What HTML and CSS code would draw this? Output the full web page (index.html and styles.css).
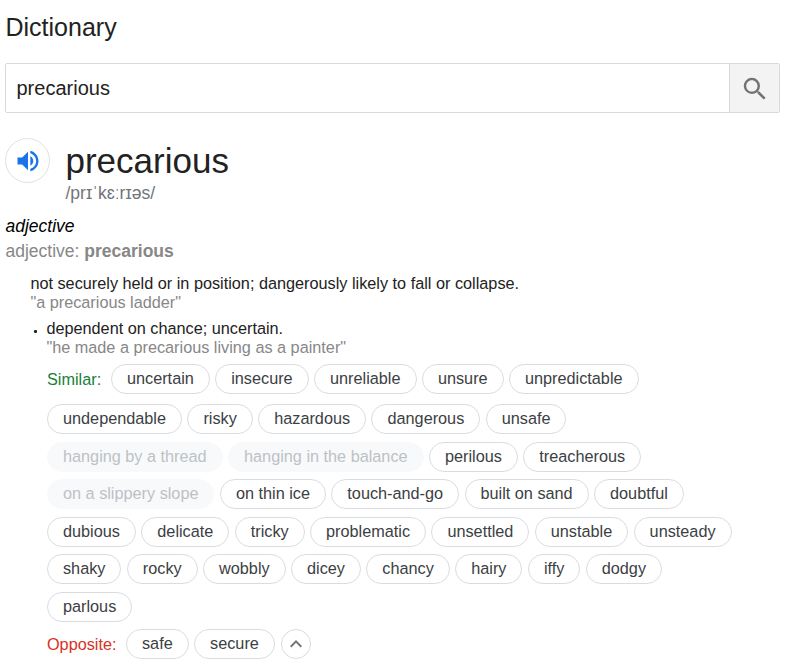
FILE: index.html
```html
<!DOCTYPE html>
<html lang="en">
<head>
<meta charset="utf-8">
<title>Dictionary</title>
<link rel="stylesheet" href="styles.css">
</head>
<body>
<main class="dictionary">
  <h1 class="title">Dictionary</h1>
  <div class="search">
    <div class="search-text">precarious</div>
    <button class="search-button" aria-label="Search">
      <svg class="search-icon" viewBox="0 0 24 24"><path d="M15.5 14h-.79l-.28-.27A6.47 6.47 0 0 0 16 9.5 6.5 6.5 0 1 0 9.5 16c1.61 0 3.09-.59 4.23-1.57l.27.28v.79l5 4.99L20.49 19l-4.99-5zm-6 0C7.01 14 5 11.99 5 9.5S7.01 5 9.5 5 14 7.01 14 9.5 11.99 14 9.5 14z"/></svg>
    </button>
  </div>
  <header class="entry">
    <button class="speaker" aria-label="Listen">
      <svg class="speaker-icon" viewBox="0 0 24 24"><path d="M3 9v6h4l5 5V4L7 9H3zm13.5 3A4.5 4.5 0 0 0 14 7.97v8.05A4.5 4.5 0 0 0 16.5 12zM14 3.23v2.06c2.89.86 5 3.54 5 6.71s-2.11 5.85-5 6.71v2.06c4.01-.91 7-4.49 7-8.77s-2.99-7.86-7-8.77z"/></svg>
    </button>
    <div>
      <h2 class="word">precarious</h2>
      <div class="phonetic">/prɪˈkɛːrɪəs/</div>
    </div>
  </header>
  <div class="part">adjective</div>
  <div class="forms">adjective: <b>precarious</b></div>
  <section class="sense">
    <div class="definition">not securely held or in position; dangerously likely to fall or collapse.</div>
    <div class="example">"a precarious ladder"</div>
    <div class="subsense">
      <div class="definition bulleted">dependent on chance; uncertain.</div>
      <div class="example">"he made a precarious living as a painter"</div>
      <div class="row first"><span class="label similar">Similar:</span><span class="chip">uncertain</span><span class="chip">insecure</span><span class="chip">unreliable</span><span class="chip">unsure</span><span class="chip">unpredictable</span></div>
      <div class="row"><span class="chip">undependable</span><span class="chip">risky</span><span class="chip">hazardous</span><span class="chip">dangerous</span><span class="chip">unsafe</span></div>
      <div class="row"><span class="chip muted">hanging by a thread</span><span class="chip muted">hanging in the balance</span><span class="chip">perilous</span><span class="chip">treacherous</span></div>
      <div class="row"><span class="chip muted">on a slippery slope</span><span class="chip">on thin ice</span><span class="chip">touch-and-go</span><span class="chip">built on sand</span><span class="chip">doubtful</span></div>
      <div class="row"><span class="chip">dubious</span><span class="chip">delicate</span><span class="chip">tricky</span><span class="chip">problematic</span><span class="chip">unsettled</span><span class="chip">unstable</span><span class="chip">unsteady</span></div>
      <div class="row"><span class="chip">shaky</span><span class="chip">rocky</span><span class="chip">wobbly</span><span class="chip">dicey</span><span class="chip">chancy</span><span class="chip">hairy</span><span class="chip">iffy</span><span class="chip">dodgy</span></div>
      <div class="row"><span class="chip">parlous</span></div>
      <div class="row"><span class="label opposite">Opposite:</span><span class="chip">safe</span><span class="chip">secure</span><button class="collapse" aria-label="Show less"><svg class="collapse-icon" viewBox="0 0 24 24"><path d="M12 8l-6 6 1.41 1.41L12 10.83l4.59 4.58L18 14z"/></svg></button></div>
    </div>
  </section>
</main>
</body>
</html>
```
FILE: styles.css
```css
* { box-sizing: border-box; }
body {
  margin: 0;
  background: #fff;
  color: #222;
  font-family: "Liberation Sans", Arial, sans-serif;
  font-size: 16.25px;
}
button { padding: 0; font: inherit; }
.dictionary { padding: 12px 9px 0 5px; }
.title { margin: 0; padding-left: 0.5px; font-size: 25px; font-weight: 400; line-height: 31px; }
.search {
  display: flex;
  height: 50px;
  margin-top: 20px;
  border: 1px solid #d9d9d9;
  border-radius: 2px;
}
.search-text { flex: 1; padding-left: 10.5px; font-size: 20px; line-height: 48px; }
.search-button {
  display: flex;
  align-items: center;
  justify-content: center;
  width: 50px;
  border: 0;
  border-left: 1px solid #d9d9d9;
  background: #f3f3f3;
}
.search-icon { width: 30px; height: 30px; margin-top: 1px; fill: #737373; }
.entry { display: flex; gap: 15.5px; margin-top: 25px; }
.speaker {
  display: flex;
  align-items: center;
  justify-content: center;
  width: 45px;
  height: 45px;
  border: 1px solid #dfe1e5;
  border-radius: 50%;
  background: #fff;
}
.speaker-icon { width: 28px; height: 28px; fill: #1a73e8; }
.word { margin: 3px 0 0; font-size: 35px; font-weight: 400; line-height: 40px; }
.phonetic { margin-top: 1px; color: #70757a; font-size: 17.5px; line-height: 22px; }
.part { margin-top: 11px; padding-left: 0.5px; color: #000; font-size: 17.5px; font-style: italic; line-height: 22px; }
.forms { margin-top: 3px; padding-left: 0.5px; color: #878787; font-size: 17.5px; line-height: 22px; }
.sense { margin-top: 12px; padding-left: 25.4px; line-height: 19px; }
.example { color: #878787; }
.subsense { margin-top: 7px; padding-left: 16px; }
.bulleted { position: relative; }
.bulleted::before {
  content: "";
  position: absolute;
  top: 11px;
  left: -12px;
  width: 3px;
  height: 3px;
  border-radius: 1px;
  background: #222;
}
.row { display: flex; gap: 5.4px; height: 30px; margin: 7.5px 0 0 0.6px; }
.row.first { margin-top: 7px; margin-bottom: 10px; }
.row.first + .row { margin-top: 0; }
.label { line-height: 30px; }
.similar { width: 58.6px; color: #188038; }
.opposite { width: 73.6px; color: #d93025; }
.chip {
  height: 30px;
  padding: 0 15px;
  border: 1px solid #dadce0;
  border-radius: 15px;
  color: #3c4043;
  line-height: 26px;
  white-space: nowrap;
}
.chip.muted { border-color: #f8f9fa; background: #f8f9fa; color: #bdc1c6; }
.collapse {
  display: flex;
  align-items: center;
  justify-content: center;
  width: 30px;
  height: 30px;
  margin-left: 0.5px;
  border: 1px solid #dadce0;
  border-radius: 50%;
  background: #fff;
}
.collapse-icon { width: 24px; height: 24px; fill: #70757a; }
```
